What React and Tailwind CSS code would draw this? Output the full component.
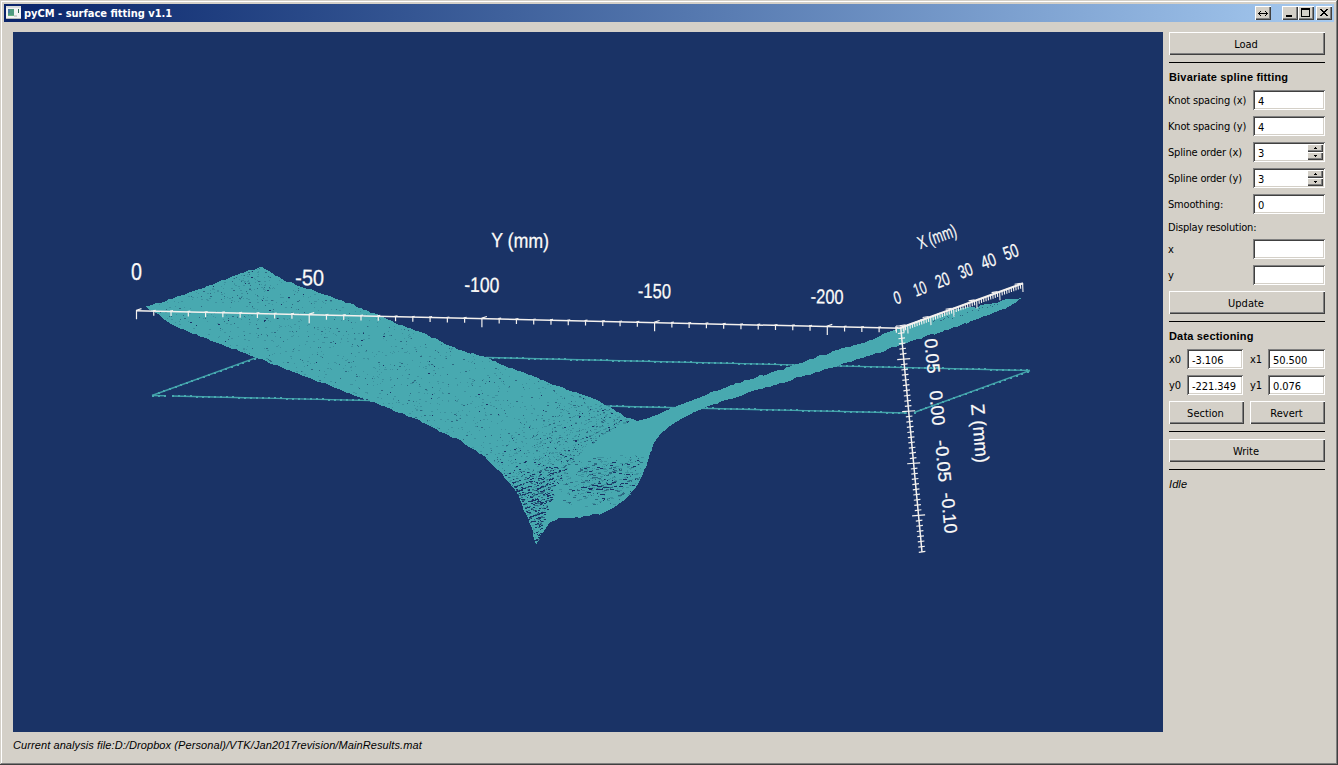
import React from "react";

const BG = "#1a3366";
const TEAL = "#48a9b0";

const UI = "font-['DejaVu_Sans_Condensed','DejaVu_Sans',sans-serif] [font-stretch:condensed] text-[11px]";
const RAISED =
  "bg-[#d4d0c8] shadow-[inset_1px_1px_0_#ffffff,inset_-1px_-1px_0_#404040,inset_-2px_-2px_0_#808080]";
const SUNKEN =
  "bg-white shadow-[inset_1px_1px_0_#808080,inset_-1px_-1px_0_#ffffff,inset_2px_2px_0_#404040,inset_-2px_-2px_0_#d4d0c8]";

function makeRandom(seed) {
  let s = seed;
  return () => {
    s = (s * 1664525 + 1013904223) % 4294967296;
    return s / 4294967296;
  };
}

const OUTLINE = [
  [146, 307], [172, 299], [200, 289], [232, 277], [262, 266], [268, 271], [283, 280], [300, 286], [323, 294], [350, 304], [375, 314],
  [400, 325], [425, 334], [450, 346], [470, 353], [488, 358], [508, 367], [527, 374], [555, 385], [580, 394], [600, 402],
  [613, 409], [626, 417], [637, 421], [650, 418], [670, 409], [690, 401], [710, 393], [745, 380.5], [783, 369], [810, 359.5],
  [838, 350], [865, 343], [880, 336], [900, 327], [925, 319], [960, 308], [977, 307], [990, 303.5], [1010, 299], [1021, 297.5], [1017, 302.5],
  [1005, 308.5], [993, 313], [960, 325.5], [920, 338.5], [900, 345], [880, 352], [860, 358], [840, 365], [800, 377], [750, 392.5], [720, 402], [703, 409],
  [690, 414], [680, 419], [672, 425], [663, 432], [656, 440], [653, 445], [649, 457], [646, 467], [638, 484], [629, 496],
  [615, 507], [600, 514], [580, 517], [560, 518], [551, 521], [545, 529], [540, 536], [536, 545], [534, 538], [532, 528],
  [525, 512], [517, 493], [503, 475], [485, 457], [460, 440], [440, 432], [418, 420], [400, 413], [373, 402], [347, 393],
  [297, 373], [255, 357], [207, 339], [173, 325],
];

function roughOutline() {
  const rnd = makeRandom(11);
  const pts = [];
  OUTLINE.forEach(([x1, y1], i) => {
    const [x2, y2] = OUTLINE[(i + 1) % OUTLINE.length];
    const n = Math.max(1, Math.round(Math.hypot(x2 - x1, y2 - y1) / 4));
    for (let k = 0; k < n; k++) {
      const t = k / n;
      pts.push(`${Math.round(x1 + (x2 - x1) * t)},${(y1 + (y2 - y1) * t + (rnd() - 0.5) * 1.8).toFixed(1)}`);
    }
  });
  return pts.join(" ");
}

function inside(x, y) {
  let hit = false;
  for (let i = 0, j = OUTLINE.length - 1; i < OUTLINE.length; j = i++) {
    const [xi, yi] = OUTLINE[i];
    const [xj, yj] = OUTLINE[j];
    if (yi > y !== yj > y && x < ((xj - xi) * (y - yi)) / (yj - yi) + xi) hit = !hit;
  }
  return hit;
}

// Right-hand limit of the front sheet, where it folds under the far sheet.
const FOLD = [[400, 700], [418, 634], [425, 622], [432, 608], [440, 596], [450, 584], [460, 574], [475, 564], [488, 555], [500, 552], [512, 546], [545, 537]];
function foldX(y) {
  if (y <= FOLD[0][0]) return FOLD[0][1];
  for (let i = 1; i < FOLD.length; i++) {
    if (y <= FOLD[i][0]) {
      const [y0, x0] = FOLD[i - 1];
      const [y1, x1] = FOLD[i];
      return x0 + ((x1 - x0) * (y - y0)) / (y1 - y0);
    }
  }
  return 536;
}

function buildSpeckles() {
  const rnd = makeRandom(2017);
  const out = ["", "", ""];
  const put = (x, y, w, tone) => {
    out[tone] += `M${x} ${y}h${w}v1h${-w}z`;
  };
  for (let y = 266; y < 544; y++) {
    for (let x = 150; x < 660; x++) {
      if (!inside(x, y + 1) || !inside(x + 1, y - 1)) continue;
      const r = rnd();
      const tone = rnd();
      if (x < foldX(y)) {
        let d = 0.032;
        let dark = 0.035;
        if (y < 303 && x < 275) {
          d = 0.06;
          dark = 0.06;
        }
        const near = Math.max(0, Math.min(1, (x + 1.4 * y - 1110) / 130));
        d += near * 0.16;
        dark += near * 0.1;
        if (near > 0.25) {
          const phase = (y + x * 0.42 + Math.sin(x / 14) * 1.1) / 4.2;
          const stripe = Math.sin(phase * Math.PI * 2);
          const low = Math.max(0, Math.min(1, (y - 455) / 28));
          d *= stripe > 0 ? 1.7 + low * 0.6 : 0.3;
          dark += low * 0.3;
        }
        if (r < d) put(x, y, rnd() < 0.3 + near * 0.3 ? 2 : 1, tone < dark ? 0 : tone < dark + 0.25 ? 1 : 2);
      } else if (x < 648 && y > 440) {
        const e = Math.hypot((x - 603 + (y - 482) * 0.5) / 48, (y - 480) / 28);
        if (e < 1) {
          const stripe = Math.sin(((y + x * 0.35) / 5) * Math.PI * 2);
          const d = (1 - e) * 0.22 * (stripe > 0 ? 1.5 : 0.2) + 0.02;
          if (r < d) put(x, y, rnd() < 0.45 ? 3 : 1, tone < 0.15 * (1 - e) + 0.03 ? 0 : tone < 0.45 ? 1 : 2);
        }
      }
    }
  }
  for (let x = 925; x < 1000; x++) {
    if (rnd() < 0.3) put(x, Math.round(322 - (x - 925) * 0.27 + rnd() * 3), 1, 1);
  }
  // Open gaps in the steep part of the front sheet.
  for (let row = 0; row < 12; row++) {
    const y0 = 482 + row * 4.3;
    const left = 512 + row * 2.2;
    const right = Math.min(foldX(y0) - 1, 556);
    for (let x = left; x < right; x += 3) {
      if (rnd() < 0.66 - row * 0.02) {
        const y = Math.round(y0 - (x - left) * 0.36);
        if (inside(x, y + 1)) put(Math.round(x), y, rnd() < 0.7 ? 4 : 2, rnd() < 0.65 ? 0 : 1);
      }
    }
  }
  [[581, 487, 6], [588, 488, 5], [592, 485, 6], [596, 489, 7], [597, 486, 5], [603, 487, 6], [607, 484, 5], [612, 482, 4],
    [587, 492, 4], [600, 494, 5], [610, 489, 4], [623, 479, 4], [626, 474, 4], [633, 466, 3], [572, 490, 3], [619, 486, 4],
    [602, 498, 3], [612, 462, 4], [637, 460, 2]].forEach(([x, y, w]) => put(x, y, w, 0));
  return out;
}

const SPECKLES = buildSpeckles();
const SHAPE = roughOutline();

function DottedEdge({ x1, y1, x2, y2 }) {
  const len = Math.hypot(x2 - x1, y2 - y1);
  const n = Math.floor(len / 6);
  const dots = [];
  for (let i = 0; i <= n; i++) {
    const t = (i * 6) / len;
    dots.push(`M${Math.round(x1 + (x2 - x1) * t)} ${Math.round(y1 + (y2 - y1) * t) - 1}h2v2h-2z`);
  }
  return (
    <g>
      <line x1={x1} y1={y1} x2={x2} y2={y2} stroke="#42a1a9" strokeWidth="1.4" />
      <path d={dots.join("")} fill={TEAL} />
    </g>
  );
}

function axisTicks() {
  let y = "";
  for (let i = 0; i <= 44; i++) {
    const px = 136.5 + i * 17.27;
    const py = 310.8 + (px - 136.5) * 0.0229;
    const major = i % 10 === 0;
    y += `M${px} ${py - 1}v${major ? 9.5 : 5.5}`;
    y += major ? `M${px} ${py - 0.6}l5 -1.6` : `M${px - 1} ${py - 0.4}l3 -.5`;
  }
  let x = "";
  for (let i = 0; i <= 52; i++) {
    const px = 903 + i * 2.3;
    const py = 326.8 - (px - 901) * 0.361;
    const major = (i - 2) % 10 === 0;
    x += `M${px} ${py}l.4 ${major ? 9 : 5}`;
    if (major) x += `M${px - 8} ${py + 1.4}l6 -1`;
  }
  let z = "";
  for (let i = 0; i <= 43; i++) {
    const py = 328 + i * 5.21;
    const px = 900.7 + (py - 328) * 0.0955;
    const major = i % 10 === 6;
    const h = major ? 6.5 : 3.3;
    z += `M${px - h} ${py + 0.3}L${px + h} ${py - 0.6}`;
  }
  return { x, y, z };
}

const TICKS = axisTicks();

const LABELS = [
  { t: "0", x: 136.5, y: 279.5, w: 11, s: 24, r: 0 },
  { t: "-50", x: 309.5, y: 285.5, w: 29, s: 22.5, r: 1 },
  { t: "-100", x: 481.8, y: 292, w: 35, s: 21, r: 1 },
  { t: "-150", x: 654.3, y: 298, w: 33, s: 20.5, r: 1 },
  { t: "-200", x: 827, y: 303.5, w: 33, s: 20, r: 1 },
  { t: "Y (mm)", x: 520, y: 247.5, w: 58, s: 20.5, r: 1 },
  { t: "X (mm)", x: 939, y: 242.5, w: 40, s: 18, r: -20 },
  { t: "0", x: 899, y: 303.5, w: 7, s: 18, r: -17 },
  { t: "10", x: 922, y: 294.5, w: 13, s: 18, r: -20 },
  { t: "20", x: 944.5, y: 286, w: 14, s: 18.5, r: -20 },
  { t: "30", x: 967.5, y: 276.5, w: 14, s: 18.5, r: -20 },
  { t: "40", x: 990.5, y: 267, w: 15, s: 18.5, r: -20 },
  { t: "50", x: 1013, y: 258, w: 15, s: 19, r: -20 },
  { t: "0.05", x: 926, y: 356.5, w: 35, s: 18, r: 85 },
  { t: "0.00", x: 931, y: 408.5, w: 35, s: 18, r: 85 },
  { t: "-0.05", x: 937, y: 461.5, w: 42, s: 18, r: 85 },
  { t: "-0.10", x: 943, y: 513.5, w: 41, s: 18, r: 85 },
  { t: "Z (mm)", x: 973.5, y: 434, w: 59, s: 19, r: 85 },
];

function Viewport() {
  return (
    <svg viewBox="13 32 1150 700" className="block h-[700px] w-[1150px] shrink-0 bg-[#1a3366]">
      <DottedEdge x1={152} y1={395.5} x2={258} y2={357} />
      <DottedEdge x1={152} y1={395.5} x2={166} y2={395.8} />
      <DottedEdge x1={172} y1={396} x2={907} y2={413} />
      <DottedEdge x1={486} y1={357.5} x2={1030} y2={370.5} />
      <DottedEdge x1={914} y1={412.5} x2={1030} y2={370.5} />
      <polygon points={SHAPE} fill={TEAL} shapeRendering="crispEdges" />
      <g shapeRendering="crispEdges">
        <path d={SPECKLES[2]} fill="#3d929f" />
        <path d={SPECKLES[1]} fill="#2d6a83" />
        <path d={SPECKLES[0]} fill={BG} />
      </g>
      <g fill="none" stroke="#f4f1ee">
        <path d="M136 310.8L901 328.3" strokeWidth="1.5" />
        <path d={TICKS.y} strokeWidth="1.2" />
        <path d="M900 328L1023 283.3" strokeWidth="2.2" />
        <path d={TICKS.x} strokeWidth="1.1" />
        <path d="M900.7 327L922 552" strokeWidth="1.5" />
        <path d={TICKS.z} strokeWidth="1.2" />
        <path d="M896 326h8v6M896 326v5" strokeWidth="1.2" />
      </g>
      <g
        fill="#fbfaf8"
        stroke="#fbfaf8"
        strokeWidth="0.25"
        textAnchor="middle"
        fontFamily="'Liberation Sans', Arial, sans-serif"
      >
        {LABELS.map((l, i) => (
          <text
            key={i}
            x={l.x}
            y={l.y}
            fontSize={l.s}
            textLength={l.w}
            lengthAdjust="spacingAndGlyphs"
            transform={`rotate(${l.r} ${l.x} ${l.y})`}
          >
            {l.t}
          </text>
        ))}
      </g>
    </svg>
  );
}

function Button({ children, className = "" }) {
  return (
    <button type="button" className={`flex h-[23px] items-center justify-center pt-px pr-0.5 ${RAISED} ${className}`}>
      {children}
    </button>
  );
}

function Field({ value = "", className = "w-[72px]" }) {
  return (
    <div className={`flex h-5 shrink-0 items-center pl-[5px] pt-[2px] tracking-[-0.05px] ${SUNKEN} ${className}`}>
      {value}
    </div>
  );
}

function SpinField({ value }) {
  return (
    <div className={`flex h-5 w-[72px] shrink-0 items-center justify-between pr-[2px] pl-[5px] ${SUNKEN}`}>
      <span className="pt-[2px]">{value}</span>
      <span className="flex h-4 w-4 flex-col">
        {["M4 1h1v1h1v1H3V2h1z", "M3 1h3v1H5v1H4V2H3z"].map((d) => (
          <span key={d} className={`flex h-2 w-4 items-center justify-center ${RAISED}`}>
            <svg viewBox="0 0 9 4" className="h-1 w-[9px]" shapeRendering="crispEdges">
              <path d={d} />
            </svg>
          </span>
        ))}
      </span>
    </div>
  );
}

function Row({ label, children }) {
  return (
    <div className="mb-1.5 flex h-5 items-center justify-between">
      <span className="-ml-px whitespace-nowrap tracking-[-0.17px]">{label}</span>
      {children}
    </div>
  );
}

function Heading({ children }) {
  return (
    <div className="flex h-[13px] items-center font-['Liberation_Sans',Arial,sans-serif] text-[11px] font-bold tracking-[0.18px]">
      {children}
    </div>
  );
}

const Rule = () => <div className="h-px bg-black" />;

function Sidebar() {
  return (
    <aside className="ml-1.5 flex w-[156px] flex-col leading-[13px] text-black">
      <Button className="mb-[7px]">Load</Button>
      <Rule />
      <div className="mt-2 mb-1.5">
        <Heading>Bivariate spline fitting</Heading>
      </div>
      <Row label="Knot spacing (x)"><Field value="4" /></Row>
      <Row label="Knot spacing (y)"><Field value="4" /></Row>
      <Row label="Spline order (x)"><SpinField value="3" /></Row>
      <Row label="Spline order (y)"><SpinField value="3" /></Row>
      <Row label="Smoothing:"><Field value="0" /></Row>
      <div className="mb-[5px] -ml-px h-3.5 pt-px tracking-[-0.2px]">Display resolution:</div>
      <Row label="x"><Field /></Row>
      <Row label="y"><Field /></Row>
      <Button className="mb-[7px]">Update</Button>
      <Rule />
      <div className="mt-2 mb-1.5">
        <Heading>Data sectioning</Heading>
      </div>
      {[["x0", "-3.106", "x1", "50.500"], ["y0", "-221.349", "y1", "0.076"]].map((r) => (
        <div key={r[0]} className="mb-1.5 flex h-5 items-center">
          <span className="w-[18px]">{r[0]}</span>
          <Field value={r[1]} className="w-[56px]" />
          <span className="ml-[7px] w-[18px]">{r[2]}</span>
          <Field value={r[3]} className="w-[57px]" />
        </div>
      ))}
      <div className="mb-[7px] flex gap-1.5">
        <Button className="w-[75px]">Section</Button>
        <Button className="w-[75px]">Revert</Button>
      </div>
      <Rule />
      <Button className="mt-[7px] mb-[7px]">Write</Button>
      <Rule />
      <div className="mt-2 font-['Liberation_Sans',Arial,sans-serif] tracking-[0.1px] italic">Idle</div>
    </aside>
  );
}

function CaptionButton({ path, className = "" }) {
  return (
    <span className={`flex h-[14px] w-4 ${RAISED} ${className}`}>
      <svg viewBox="0 0 16 14" className="h-[14px] w-4" shapeRendering="crispEdges">
        <path d={path} fill="#000" />
      </svg>
    </span>
  );
}

const CAPTION = {
  swap: "M3 7h10v1H3zM4 6h1v3H4zM5 5h1v1H5zM5 9h1v1H5zM11 6h1v3h-1zM10 5h1v1h-1zM10 9h1v1h-1z",
  min: "M4 9h6v2H4z",
  max: "M3 2h9v9H3zM4 4v6h7V4z",
  close: "M4 3h2v1h1v1h2V4h1V3h2v1h-1v1h-1v1H9v1h1v1h1v1h1v1h-2V9H9V8H7v1H6v1H4V9h1V8h1V7h1V6H6V5H5V4H4z",
};

export default function App() {
  return (
    <div className="flex h-[765px] w-[1338px] flex-col bg-[#d4d0c8] p-1 shadow-[inset_-1px_-1px_0_#404040,inset_1px_1px_0_#d4d0c8,inset_-2px_-2px_0_#808080,inset_2px_2px_0_#ffffff]">
      <header className="flex h-[18px] items-center bg-linear-to-r from-[#0a246a] to-[#a6caf0] pl-0.5 pr-0.5">
        <svg viewBox="0 0 16 14" className="h-[14px] w-4" shapeRendering="crispEdges">
          <rect width="15" height="13" fill="#f4f4f4" />
          <path d="M0 0h15v2H0z" fill="#d9dcdc" />
          <path d="M0 12h15v1H0z" fill="#b9bcbc" />
          <path d="M2 3h6v7H2z" fill="#4f9a80" />
          <path d="M2 3h2v4H2z" fill="#4a7da0" />
          <path d="M2 9h6v1H2z" fill="#69b383" />
          <path d="M8 9h3v2H8z" fill="#cfd2d2" />
          <path d="M12 3h1v4h-1z" fill="#2f6b55" />
        </svg>
        <h1 className={`ml-0.5 grow pt-0.5 whitespace-nowrap font-bold text-white ${UI}`}>pyCM - surface fitting v1.1</h1>
        <CaptionButton path={CAPTION.swap} />
        <CaptionButton path={CAPTION.min} className="ml-[11px]" />
        <CaptionButton path={CAPTION.max} />
        <CaptionButton path={CAPTION.close} className="ml-0.5" />
      </header>
      <main className={`flex pt-2.5 pl-[9px] ${UI}`}>
        <Viewport />
        <Sidebar />
      </main>
      <footer className="mt-[7px] pl-[9px] font-['Liberation_Sans',Arial,sans-serif] text-[11px] leading-[13px] tracking-[0.09px] text-black italic">
        Current analysis file:D:/Dropbox (Personal)/VTK/Jan2017revision/MainResults.mat
      </footer>
    </div>
  );
}
